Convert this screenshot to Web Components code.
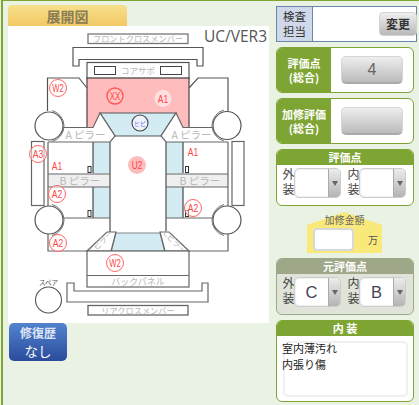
<!DOCTYPE html>
<html lang="ja">
<head>
<meta charset="utf-8">
<title>展開図</title>
<style>
  html, body { margin: 0; padding: 0; background: #e9f2e3; }
  body { font-family: "Noto Sans CJK JP", "Liberation Sans", sans-serif; overflow: hidden; }
</style>
</head>
<body>
<app-shell>
  <div slot="left">
    <panel-tab>展開図</panel-tab>
    <car-diagram></car-diagram>
    <history-btn></history-btn>
  </div>
  <inspect-box></inspect-box>
  <score-row value="4">評価点<br>(総合)</score-row>
  <score-row>加修評価<br>(総合)</score-row>
  <grade-section title="評価点"></grade-section>
  <cost-box></cost-box>
  <grade-section title="元評価点" outer="C" inner="B" tone="muted"></grade-section>
  <note-box title="内 装">室内薄汚れ<br>内張り傷</note-box>
</app-shell>

<script>
class AppShell extends HTMLElement {
  constructor() {
    super();
    this.attachShadow({ mode: 'open' }).innerHTML = `
      <style>
        :host {
          display: flex; box-sizing: border-box; width: 418px; height: 405px;
          margin-left: 1px; padding: 4px 0 0 5px;
          border-left: 2px solid #7ea534;
          border-top: 1px solid #7ea534;
        }
        .left { width: 261px; flex: none; }
        .right { width: 141px; flex: none; margin-left: 7px; padding-top: 1px; display: flex; flex-direction: column; gap: 5px; }
      </style>
      <div class="left"><slot name="left"></slot></div>
      <div class="right"><slot></slot></div>`;
  }
}

class PanelTab extends HTMLElement {
  constructor() {
    super();
    this.attachShadow({ mode: 'open' }).innerHTML = `
      <style>
        :host {
          display: flex; align-items: center; justify-content: center; box-sizing: border-box;
          width: 119px; height: 21px;
          border-radius: 4px 4px 0 0;
          background: linear-gradient(#f6e08a, #f3c866);
          color: #8a7d55; font-size: 14px; font-weight: 700;
        }
      </style><slot></slot>`;
  }
}

class CarDiagram extends HTMLElement {
  constructor() {
    super();
    const label = (x, y, t, size = 9, extra = '') =>
      `<text x="${x}" y="${y}" font-size="${size}" fill="#b9b9b9" text-anchor="middle" ${extra}>${t}</text>`;
    const wheel = (cx, cy, dir) => `
      <circle cx="${cx}" cy="${cy}" r="14" fill="#fff" stroke="#555" stroke-width="1.2"/>
      <path d="M${cx + dir * 3},${cy - 15.5} A16 16 0 0 ${dir > 0 ? 1 : 0} ${cx + dir * 3},${cy + 15.5}" fill="none" stroke="#777" stroke-width="1"/>`;
    const mark = (x, y, t, kind) => {
      const txt = `<text x="${x}" y="${y + 4}" font-size="11" fill="#f44" text-anchor="middle" font-family="Liberation Sans" textLength="${t[0] === 'W' ? 11.5 : 10.5}" lengthAdjust="spacingAndGlyphs">${t}</text>`;
      if (kind === 'ring') return `<circle cx="${x}" cy="${y}" r="8.5" fill="#fff" fill-opacity=".5" stroke="#f66" stroke-width="1"/>${txt}`;
      if (kind === 'thick') return `<circle cx="${x}" cy="${y}" r="8" fill="#ffc4c4" stroke="#f55" stroke-width="1.4"/>${txt}`;
      if (kind === 'soft') return `<circle cx="${x}" cy="${y}" r="8.5" fill="#ffe0e0"/>${txt}`;
      if (kind === 'fill') return `<circle cx="${x}" cy="${y}" r="9" fill="#ffbcbc"/>${txt}`;
      return txt;
    };
    this.attachShadow({ mode: 'open' }).innerHTML = `
      <style>
        :host { display: block; width: 261px; height: 297px; background: #fff; position: relative; }
        svg { display: block; font-family: "Noto Sans CJK JP", sans-serif; }
        .ver { position: absolute; top: -1px; right: 2px; color: #555; font: 15.5px "Open Sans", sans-serif; }
      </style>
      <span class="ver">UC/VER3</span>
      <svg width="261" height="297" viewBox="8 26 261 297">
        <!-- front -->
        <rect x="88" y="34" width="100" height="9.5" fill="#fff" stroke="#777" stroke-width="1.3"/>
        ${label(138, 42, 'フロントクロスメンバー', 8.2)}
        <path d="M73,66 V47.5 H203 V66 H197 V59.5 H79 V66 Z" fill="#fff" stroke="#555" stroke-width="1.2"/>
        <rect x="87" y="62.5" width="102" height="16" fill="#fff" stroke="#555" stroke-width="1.2"/>
        <rect x="94.5" y="66.5" width="21" height="8" fill="#fff" stroke="#444"/>
        <rect x="160.5" y="66.5" width="21" height="8" fill="#fff" stroke="#444"/>
        ${label(138, 74, 'コアサポ', 8.5)}
        <rect x="87" y="78" width="102" height="50" fill="#ffbcbc" stroke="#444" stroke-width="1.2"/>
        <path d="M87,88 L79,78 H47.5 V111" fill="#fff" stroke="#555" stroke-width="1.2"/>
        <path d="M189,88 L198,78 H228 V111" fill="#fff" stroke="#555" stroke-width="1.2"/>

        <!-- sides -->
        <rect x="93" y="142" width="17" height="31.5" fill="#d3ebf3"/>
        <rect x="93" y="187" width="17" height="31" fill="#d3ebf3"/>
        <rect x="166" y="142" width="17" height="31.5" fill="#d3ebf3"/>
        <rect x="166" y="187" width="17" height="31" fill="#d3ebf3"/>
        <path d="M93,142 V173 M93,187 V218 M183,142 V173 M183,187 V218" stroke="#222" stroke-width="1" fill="none"/>
        <rect x="48" y="174" width="62" height="13" fill="#efefef"/>
        <rect x="166" y="174" width="62" height="13" fill="#efefef"/>
        <path d="M48,142 V206 M228,142 V206 M48,174 H110 M48,187 H110 M166,174 H228 M166,187 H228 M62,218 H110 M166,218 H214" stroke="#666" stroke-width="1.2" fill="none"/>
        ${label(80, 185, 'B ピラー', 10.5)}
        ${label(200, 185, 'B ピラー', 10.5)}
        <g fill="#fff" stroke="#333" stroke-width="1">
          <rect x="88" y="166.5" width="3" height="6"/><rect x="88" y="210.5" width="3" height="6"/>
          <rect x="185.5" y="166.5" width="3" height="6"/><rect x="185.5" y="210.5" width="3" height="6"/>
        </g>
        <rect x="31.5" y="141.5" width="12.5" height="64" fill="#fff" stroke="#666" stroke-width="1.2"/>
        <rect x="232" y="141.5" width="12" height="64" fill="#fff" stroke="#666" stroke-width="1.2"/>

        <!-- cabin -->
        <path d="M100,113 H176 L161,136 H115 Z" fill="#d3ebf3" stroke="#555" stroke-width="1.2"/>
        <path d="M62,127.5 H93 L100,113 L115,136 L110,142 H48" fill="#fff" stroke="#666" stroke-width="1.2"/>
        <path d="M214,127.5 H183 L176,113 L161,136 L166,142 H228" fill="#fff" stroke="#666" stroke-width="1.2"/>
        ${label(85.5, 138.5, 'A ピラー', 10.5)}
        ${label(191.5, 138.5, 'A ピラー', 10.5)}
        <path d="M110,142 V233 M166,142 V233" stroke="#666" stroke-width="1.4"/>

        <!-- rear -->
        <path d="M48,234 V251 H228 V234" fill="#fff" stroke="#666" stroke-width="1.2"/>
        <path d="M116,233 H160 L164.5,251 H111.5 Z" fill="#d3ebf3" stroke="#888" stroke-width="1"/>
        <path d="M107,232 H116 L111,251 H87 Z" fill="#fff" stroke="#666" stroke-width="1.2"/>
        <path d="M169,232 H160 L165,251 H189 Z" fill="#fff" stroke="#666" stroke-width="1.2"/>
        ${label(0, 3, 'Cピラー', 8, 'transform="translate(101 242) rotate(-45)"')}
        ${label(0, 3, 'Cピラー', 8, 'transform="translate(175 242) rotate(45)"')}
        <rect x="87" y="251" width="102" height="36" fill="#fff" stroke="#666" stroke-width="1.2"/>
        <path d="M87,275.5 H189" stroke="#666" stroke-width="1.2"/>
        ${label(138, 285, 'バックパネル', 9)}
        <path d="M67,283 H74 V291 H202 V283 H208 V302 H67 Z" fill="#fff" stroke="#666" stroke-width="1.2"/>
        <rect x="88" y="305.5" width="100" height="9.5" fill="#fff" stroke="#666" stroke-width="1.3"/>
        ${label(138, 313.5, 'リアクロスメンバー', 8.2)}

        ${wheel(49, 126, 1)}${wheel(227, 125.5, -1)}${wheel(49, 220, 1)}${wheel(227, 220, -1)}
        <circle cx="48.5" cy="300" r="13" fill="#fff" stroke="#555" stroke-width="1.1"/>
        <text x="48.5" y="285" font-size="6.5" fill="#555" text-anchor="middle">スペア</text>

        <!-- damage marks -->
        ${mark(58, 88, 'W2', 'ring')}
        ${mark(115, 96, 'XX', 'thick')}
        ${mark(163, 98.5, 'A1', 'soft')}
        <circle cx="140" cy="123" r="8" fill="#eef4f8" stroke="#444" stroke-width="1.1"/>
        <text x="140" y="126" font-size="6" fill="#66f" text-anchor="middle">ヒピ</text>
        ${mark(137, 165, 'U2', 'fill')}
        ${mark(38, 154, 'A3', 'ring')}
        ${mark(57, 166, 'A1')}
        ${mark(193, 152, 'A1')}
        ${mark(57, 194, 'A2', 'ring')}
        ${mark(193, 208, 'A2', 'ring')}
        ${mark(58, 243, 'A2', 'ring')}
        ${mark(115, 263, 'W2', 'ring')}
      </svg>`;
  }
}

class HistoryBtn extends HTMLElement {
  constructor() {
    super();
    this.attachShadow({ mode: 'open' }).innerHTML = `
      <style>
        :host {
          display: flex; flex-direction: column; align-items: center; justify-content: center;
          box-sizing: border-box; width: 58px; height: 38px; margin-left: 1px;
          border-radius: 5px; background: linear-gradient(#5283cf, #2a4c9c);
          color: #fff;
        }
        b { font-size: 12px; color: #dfe6f3; }
        span { font-size: 13.5px; }
      </style>
      <b>修復歴</b><span>なし</span>`;
  }
}

class InspectBox extends HTMLElement {
  constructor() {
    super();
    this.attachShadow({ mode: 'open' }).innerHTML = `
      <style>
        :host {
          display: flex; align-items: center; box-sizing: border-box; height: 36px;
          border: 1px solid #6a86a8; background: #fff;
        }
        .label {
          width: 36px; height: 100%; flex: none; box-sizing: border-box; background: #cfd9ea;
          border-right: 1px solid #6a86a8; color: #333; font-size: 11.5px; line-height: 15px; text-align: center;
          display: flex; align-items: center; justify-content: center;
        }
        button {
          all: unset; margin-left: auto; margin-right: -1px; width: 38px; height: 24px; text-align: center;
          box-sizing: border-box; border: 1px solid #d2d2d2; border-radius: 4px; font: 700 12px/22px "Noto Sans CJK JP", sans-serif; color: #333;
          background: linear-gradient(#efefef, #b8b8b8);
        }
      </style>
      <div class="label"><div>検査<br>担当</div></div><button>変更</button>`;
  }
}

class ScoreRow extends HTMLElement {
  constructor() {
    super();
    this.attachShadow({ mode: 'open' }).innerHTML = `
      <style>
        :host {
          display: flex; box-sizing: border-box; width: 138px; height: 46px;
          border: 1px solid #7ea534; border-radius: 6px; background: #fff; overflow: hidden;
        }
        .label {
          width: 54px; flex: none; background: #7ea534; color: #fff; display: flex; align-items: center;
          justify-content: center; text-align: center; font-size: 11px; font-weight: 700; line-height: 14.5px;
        }
        .val {
          width: 62px; height: 28px; margin: 8px 0 0 10px; box-sizing: border-box; border: 1px solid #d6d6d6;
          border-bottom: 2px solid #aaa; border-radius: 5px; background: linear-gradient(#eee, #bbb);
          color: #666; font: 16px/26px "Liberation Sans", sans-serif; text-align: center;
        }
      </style>
      <div class="label"><div><slot></slot></div></div><div class="val"></div>`;
    this.shadowRoot.querySelector('.val').textContent = this.getAttribute('value') || '';
  }
}

class PickBox extends HTMLElement {
  constructor() {
    super();
    this.attachShadow({ mode: 'open' }).innerHTML = `
      <style>
        :host { display: flex; align-items: center; }
        .cap { width: 12px; writing-mode: vertical-rl; font-size: 12px; letter-spacing: 3px; line-height: 12px; color: #444; flex: none; }
        .box {
          display: flex; box-sizing: border-box; height: 30px; border: 1px solid #ccc; border-radius: 5px;
          background: #fff; overflow: hidden; box-shadow: inset 0 0 2px #ccc;
        }
        .txt { flex: 1; text-align: center; font: 16.5px/28px "Liberation Sans", sans-serif; color: #445; }
        .arr {
          width: 11px; flex: none; background: linear-gradient(#ececec, #b4b4b4); border-left: 1px solid #aaa;
          display: flex; align-items: center; justify-content: center;
        }
        .arr i { border: 3.5px solid transparent; border-top: 5px solid #666; border-bottom: 0; }
      </style>
      <div class="cap"></div>
      <div class="box"><div class="txt"></div><div class="arr"><i></i></div></div>`;
    const s = this.shadowRoot;
    s.querySelector('.cap').textContent = this.getAttribute('cap') || '';
    s.querySelector('.txt').textContent = this.getAttribute('value') || '';
    s.querySelector('.box').style.width = (this.getAttribute('w') || 47) + 'px';
  }
}

class GradeSection extends HTMLElement {
  constructor() {
    super();
    const muted = this.getAttribute('tone') === 'muted';
    const c = muted ? '#9ea888' : '#7ea534';
    this.attachShadow({ mode: 'open' }).innerHTML = `
      <style>
        :host {
          display: block; box-sizing: border-box; width: 138px; height: 57px;
          border: 1px solid ${c}; border-radius: 6px; overflow: hidden;
          background: ${muted ? '#e0e4d8' : '#fff'};
        }
        .head { height: 15px; background: ${c}; color: #fff; font-size: 11px; font-weight: 700; line-height: 15px; text-align: center; }
        .row { display: flex; padding: 3px 0 0 5px; gap: 6px; }
      </style>
      <div class="head">${this.getAttribute('title')}</div>
      <div class="row">
        <pick-box cap="外装" w="47" value="${this.getAttribute('outer') || ''}"></pick-box>
        <pick-box cap="内装" w="47" value="${this.getAttribute('inner') || ''}"></pick-box>
      </div>`;
  }
}

class CostBox extends HTMLElement {
  constructor() {
    super();
    this.attachShadow({ mode: 'open' }).innerHTML = `
      <style>
        :host {
          display: block; position: relative; isolation: isolate; box-sizing: border-box; width: 75px; height: 41px; margin: 1px 0 0 31px; padding-top: 1px;
          color: #666; font-size: 10px; text-align: center; line-height: 14px;
        }
        :host::before {
          content: ""; position: absolute; inset: 0; z-index: -1; background: #f9e97a;
          clip-path: polygon(0 32%, 50% 0, 100% 32%, 100% 100%, 0 100%);
        }
        .row { display: flex; align-items: center; padding: 1px 0 0 6px; }
        .in { width: 41px; height: 23px; box-sizing: border-box; background: #fff; border: 2px solid #d8d8d8; border-radius: 4px; }
        .unit { margin-left: 14px; color: #555; font-size: 10px; }
      </style>
      <div>加修金額</div>
      <div class="row"><div class="in"></div><div class="unit">万</div></div>`;
  }
}

class NoteBox extends HTMLElement {
  constructor() {
    super();
    this.attachShadow({ mode: 'open' }).innerHTML = `
      <style>
        :host {
          display: block; box-sizing: border-box; width: 138px; height: 82px;
          border: 1px solid #7ea534; border-radius: 6px; overflow: hidden; background: #fff;
        }
        .head { height: 15px; background: #7ea534; color: #fff; font-size: 11px; font-weight: 700; line-height: 15px; text-align: center; }
        .area {
          box-sizing: border-box; height: 56px; margin: 5px 5px 0 6px; border: 2px solid #f0f0f0; border-radius: 5px;
          color: #222; font-size: 11px; line-height: 16px;
        }
        .txt { margin: -3px 0 0 -3px; }
      </style>
      <div class="head">${this.getAttribute('title')}</div>
      <div class="area"><div class="txt"><slot></slot></div></div>`;
  }
}

customElements.define('pick-box', PickBox);
customElements.define('app-shell', AppShell);
customElements.define('panel-tab', PanelTab);
customElements.define('car-diagram', CarDiagram);
customElements.define('history-btn', HistoryBtn);
customElements.define('inspect-box', InspectBox);
customElements.define('score-row', ScoreRow);
customElements.define('grade-section', GradeSection);
customElements.define('cost-box', CostBox);
customElements.define('note-box', NoteBox);
</script>
</body>
</html>
